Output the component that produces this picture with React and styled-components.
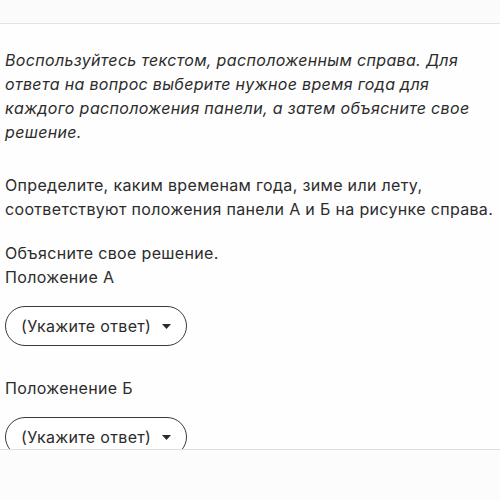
import React from "react";
import styled, { createGlobalStyle } from "styled-components";

const Global = createGlobalStyle`
  html, body { margin: 0; padding: 0; background: #fcfcfc; }
  body { font-family: Inter, "Noto Sans", "Liberation Sans", sans-serif; color: #2b2b2b; }
`;

const TopBand = styled.div`
  height: 23px;
  background: #fbfbfb;
  border-bottom: 1px solid #e3e3e3;
`;

const Panel = styled.div`
  height: 426px;
  overflow: hidden;
  background: #fefefe;
  border-bottom: 1px solid #dedede;
  padding: 24px 5px 0 5px;
  box-sizing: border-box;
  display: flex;
  flex-direction: column;
  align-items: flex-start;
`;

const Text = styled.p`
  margin: ${(p) => p.$mt || 0}px 0 0 0;
  font-size: 16px;
  line-height: 24px;
  font-style: ${(p) => (p.$italic ? "italic" : "normal")};
  color: #2c2c2c;
  letter-spacing: 0.33px;
  white-space: nowrap;
`;

const Select = styled.button`
  margin-top: ${(p) => p.$mt}px;
  flex: none;
  height: 40px;
  width: 182px;
  box-sizing: border-box;
  border: 1.3px solid #3a3a3a;
  border-radius: 20px;
  background: #fff;
  padding: 0 0 0 15px;
  display: flex;
  align-items: center;
  gap: 8px;
  font-family: inherit;
  font-size: 16px;
  letter-spacing: 0.33px;
  color: #2c2c2c;
`;

const Caret = styled.svg`
  width: 9px;
  height: 5px;
  margin-left: 3px;
`;

function Dropdown({ mt }) {
  return (
    <Select $mt={mt}>
      <span>(Укажите ответ)</span>
      <Caret viewBox="0 0 9 5">
        <path d="M0 0 L9 0 L4.5 5 Z" fill="#2a2a2a" />
      </Caret>
    </Select>
  );
}

export default function App() {
  return (
    <>
      <Global />
      <TopBand />
      <Panel>
        <Text $italic>
          Воспользуйтесь текстом, расположенным справа. Для
          <br />
          ответа на вопрос выберите нужное время года для
          <br />
          каждого расположения панели, а затем объясните свое
          <br />
          решение.
        </Text>
        <Text $mt={29}>
          Определите, каким временам года, зиме или лету,
          <br />
          соответствуют положения панели А и Б на рисунке справа.
        </Text>
        <Text $mt={20}>Объясните свое решение.</Text>
        <Text>Положение А</Text>
        <Dropdown mt={17} />
        <Text $mt={30}>Положенение Б</Text>
        <Dropdown mt={17} />
      </Panel>
    </>
  );
}
